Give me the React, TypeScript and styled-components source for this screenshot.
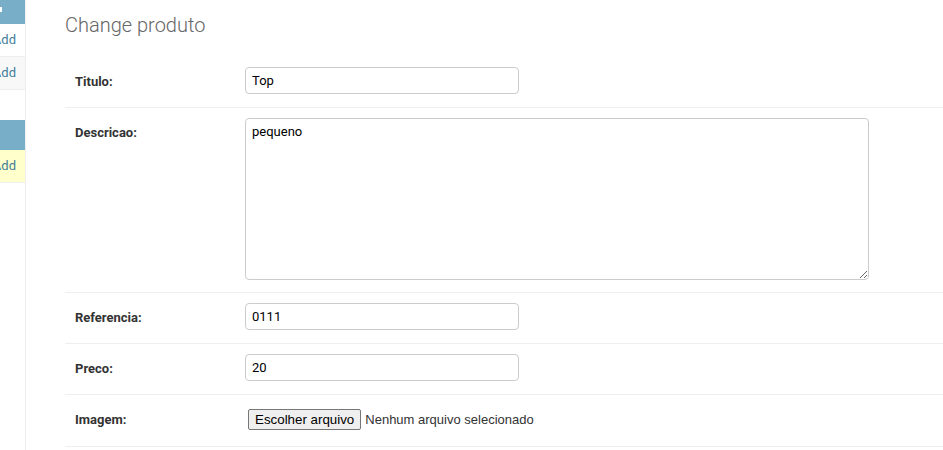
import React from "react";
import styled, { createGlobalStyle } from "styled-components";

const Global = createGlobalStyle`
  html, body { margin: 0; padding: 0; background: #fff; }
  body { font-family: Roboto, "Liberation Sans", sans-serif; color: #333; }
  * { box-sizing: border-box; }
`;

const Page = styled.div`
  display: flex;
  min-height: 100vh;
  overflow: hidden;
`;

const Sidebar = styled.nav`
  width: 26px;
  flex-shrink: 0;
  border-right: 1px solid #eee;
  overflow: hidden;
  display: flex;
  flex-direction: column;
`;

const Caption = styled.div<{ $h: number }>`
  position: relative;
  height: ${(p) => p.$h}px;
  background: #79aec8;
`;

const CaptionTail = styled.span`
  position: absolute;
  left: 0;
  top: 7px;
  width: 2px;
  height: 5px;
  background: #fff;
`;

const ModRow = styled.div<{ $bg: string }>`
  height: 33px;
  background: ${(p) => p.$bg};
  border-bottom: 1px solid #eee;
  display: flex;
  justify-content: flex-end;
  align-items: center;
  padding-right: 9px;
  white-space: nowrap;
`;

const AddLink = styled.span`
  flex-shrink: 0;
  font-size: 13px;
  color: #447e9b;
  line-height: 32px;
`;

const Gap = styled.div`
  height: 30px;
`;

const Main = styled.main`
  flex: 1;
  min-width: 0;
  padding: 13px 0 0 39px;
`;

const Title = styled.h1`
  margin: 0 0 20px;
  font-size: 20px;
  line-height: 24px;
  font-weight: 300;
  color: #666;
`;

const Row = styled.div<{ $pb?: number }>`
  display: flex;
  align-items: flex-start;
  padding: 10px 10px ${(p) => p.$pb ?? 13}px;
  border-bottom: 1px solid #eee;
`;

const Label = styled.label`
  width: 170px;
  flex-shrink: 0;
  padding: 7px 10px 0 0;
  font-size: 13px;
  font-weight: 700;
  color: #333;
`;

const TextInput = styled.input`
  width: 274px;
  height: 27px;
  padding: 5px 6px;
  border: 1px solid #ccc;
  border-radius: 4px;
  font-family: Roboto, sans-serif;
  font-size: 13px;
  color: #000;
  margin: 0;
  outline: none;
`;

const TextArea = styled.textarea`
  width: 624px;
  height: 162px;
  padding: 5px 6px;
  border: 1px solid #ccc;
  border-radius: 4px;
  font-family: Roboto, sans-serif;
  font-size: 13px;
  color: #000;
  margin: 0;
  outline: none;
  display: block;
`;

const FileWrap = styled.div`
  display: flex;
  align-items: center;
  padding: 4px 3px 3px;
  font-family: "Liberation Sans", Arial, sans-serif;
  font-size: 13px;
`;

const FileButton = styled.button`
  height: 21px;
  padding: 1px 6px;
  margin: 0 4px 0 0;
  border: 1px solid #767676;
  border-radius: 2px;
  background: #efefef;
  color: #000;
  font-family: "Liberation Sans", Arial, sans-serif;
  font-size: 13.333px;
  line-height: 17px;
`;

const FileStatus = styled.span`
  color: #333;
  font-size: 13px;
`;

export default function App() {
  return (
    <>
      <Global />
      <Page>
        <Sidebar>
          <Caption $h={24}>
            <CaptionTail />
          </Caption>
          <ModRow $bg="#fff">
            <AddLink>Add</AddLink>
          </ModRow>
          <ModRow $bg="#f8f8f8">
            <AddLink>Add</AddLink>
          </ModRow>
          <Gap />
          <Caption $h={30} />
          <ModRow $bg="#ffc">
            <AddLink>Add</AddLink>
          </ModRow>
        </Sidebar>
        <Main>
          <Title>Change produto</Title>
          <form>
            <Row>
              <Label>Titulo:</Label>
              <TextInput defaultValue="Top" />
            </Row>
            <Row $pb={12}>
              <Label>Descricao:</Label>
              <TextArea defaultValue="pequeno" />
            </Row>
            <Row>
              <Label>Referencia:</Label>
              <TextInput defaultValue="0111" />
            </Row>
            <Row>
              <Label>Preco:</Label>
              <TextInput defaultValue="20" />
            </Row>
            <Row>
              <Label>Imagem:</Label>
              <FileWrap>
                <FileButton type="button">Escolher arquivo</FileButton>
                <FileStatus>Nenhum arquivo selecionado</FileStatus>
              </FileWrap>
            </Row>
          </form>
        </Main>
      </Page>
    </>
  );
}
